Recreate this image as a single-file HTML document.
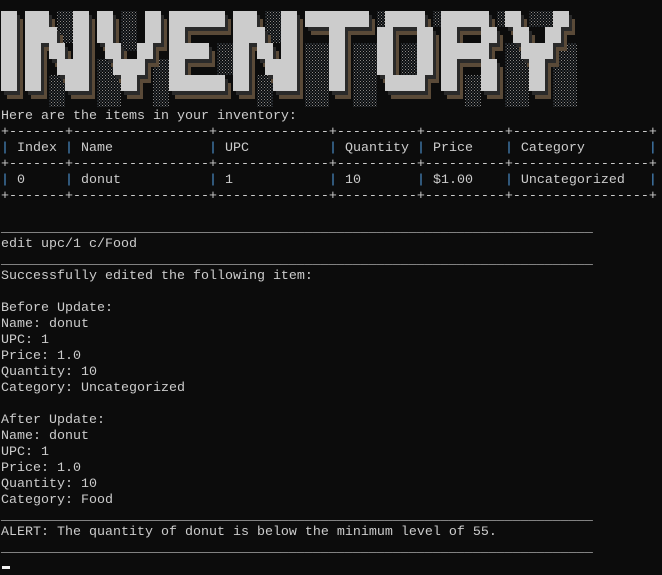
<!DOCTYPE html>
<html><head><meta charset="utf-8"><style>
html,body{margin:0;padding:0;background:#0c0c0c;width:662px;height:575px;overflow:hidden;position:relative}
pre{position:absolute;left:1px;top:109px;margin:0;font-family:"Liberation Mono",monospace;font-size:13.33px;line-height:16px;color:#cccccc;white-space:pre}
.b{color:#4f97d6}
svg{position:absolute;left:0;top:0}
.cur{position:absolute;left:2px;top:566px;width:8px;height:3px;background:#f2f2f2}
</style></head><body>
<svg width="662" height="110">
<defs>
<pattern id="dots" width="3" height="3" patternUnits="userSpaceOnUse"><rect width="3" height="3" fill="#0c0c0c"/><rect width="1" height="1" fill="#8a8a8a"/><rect x="1.5" y="1.5" width="1" height="1" fill="#6a7a8a"/></pattern>
<g id="sh">
<rect x="1" y="11" width="16" height="80"/>
<rect x="25" y="11" width="24" height="16"/><rect x="73" y="11" width="16" height="16"/>
<rect x="25" y="27" width="32" height="16"/><rect x="73" y="27" width="16" height="16"/>
<rect x="25" y="43" width="16" height="16"/><rect x="49" y="43" width="16" height="16"/><rect x="73" y="43" width="16" height="16"/>
<rect x="25" y="59" width="16" height="16"/><rect x="57" y="59" width="32" height="16"/>
<rect x="25" y="75" width="16" height="16"/><rect x="65" y="75" width="24" height="16"/>
<rect x="97" y="11" width="16" height="32"/><rect x="145" y="11" width="16" height="32"/>
<rect x="105" y="43" width="16" height="16"/><rect x="137" y="43" width="16" height="16"/>
<rect x="113" y="59" width="32" height="16"/><rect x="121" y="75" width="16" height="16"/>
<rect x="169" y="11" width="56" height="16"/><rect x="169" y="27" width="16" height="64"/><rect x="169" y="43" width="40" height="16"/><rect x="169" y="75" width="56" height="16"/>
<rect x="233" y="11" width="24" height="16"/><rect x="281" y="11" width="16" height="16"/>
<rect x="233" y="27" width="32" height="16"/><rect x="281" y="27" width="16" height="16"/>
<rect x="233" y="43" width="16" height="16"/><rect x="257" y="43" width="16" height="16"/><rect x="281" y="43" width="16" height="16"/>
<rect x="233" y="59" width="16" height="16"/><rect x="265" y="59" width="32" height="16"/>
<rect x="233" y="75" width="16" height="16"/><rect x="273" y="75" width="24" height="16"/>
<rect x="305" y="11" width="64" height="16"/><rect x="329" y="27" width="16" height="64"/>
<rect x="385" y="11" width="40" height="16"/><rect x="377" y="27" width="16" height="48"/><rect x="417" y="27" width="16" height="48"/><rect x="385" y="75" width="40" height="16"/>
<rect x="441" y="11" width="48" height="16"/><rect x="441" y="27" width="16" height="64"/><rect x="481" y="27" width="16" height="16"/><rect x="441" y="43" width="48" height="16"/><rect x="481" y="59" width="16" height="32"/>
<rect x="505" y="11" width="16" height="16"/><rect x="553" y="11" width="16" height="16"/>
<rect x="513" y="27" width="16" height="16"/><rect x="545" y="27" width="16" height="16"/>
<rect x="521" y="43" width="32" height="16"/><rect x="529" y="59" width="16" height="32"/>
</g>
</defs>
<g fill="url(#dots)">
<rect x="57" y="11" width="16" height="32"/><rect x="49" y="75" width="16" height="32"/>
<rect x="97" y="59" width="24" height="48"/><rect x="121" y="11" width="16" height="40"/><rect x="153" y="59" width="16" height="48"/>
<rect x="217" y="43" width="16" height="32"/>
<rect x="265" y="11" width="16" height="32"/><rect x="257" y="75" width="16" height="32"/>
<rect x="305" y="43" width="24" height="64"/><rect x="353" y="43" width="24" height="64"/>
<rect x="401" y="43" width="16" height="32"/><rect x="377" y="11" width="8" height="16"/><rect x="433" y="11" width="8" height="16"/>
<rect x="465" y="75" width="16" height="32"/><rect x="497" y="11" width="8" height="16"/>
<rect x="529" y="11" width="24" height="16"/><rect x="505" y="43" width="24" height="64"/><rect x="553" y="43" width="24" height="64"/>
</g>
<use href="#sh" transform="translate(6,8)" fill="#5a4a38"/>
<use href="#sh" transform="translate(3,4)" fill="#2a2a2a"/>
<use href="#sh" fill="#cccccc"/>
</svg>
<pre>Here are the items in your inventory:
+-------+-----------------+--------------+----------+----------+-----------------+
<span class="b">|</span> Index <span class="b">|</span> Name            <span class="b">|</span> UPC          <span class="b">|</span> Quantity <span class="b">|</span> Price    <span class="b">|</span> Category        <span class="b">|</span>
+-------+-----------------+--------------+----------+----------+-----------------+
<span class="b">|</span> 0     <span class="b">|</span> donut           <span class="b">|</span> 1            <span class="b">|</span> 10       <span class="b">|</span> $1.00    <span class="b">|</span> Uncategorized   <span class="b">|</span>
+-------+-----------------+--------------+----------+----------+-----------------+

__________________________________________________________________________
edit upc/1 c/Food
__________________________________________________________________________
Successfully edited the following item:

Before Update:
Name: donut
UPC: 1
Price: 1.0
Quantity: 10
Category: Uncategorized

After Update:
Name: donut
UPC: 1
Price: 1.0
Quantity: 10
Category: Food
__________________________________________________________________________
ALERT: The quantity of donut is below the minimum level of 55.
__________________________________________________________________________</pre>
<div class="cur"></div>
</body></html>
